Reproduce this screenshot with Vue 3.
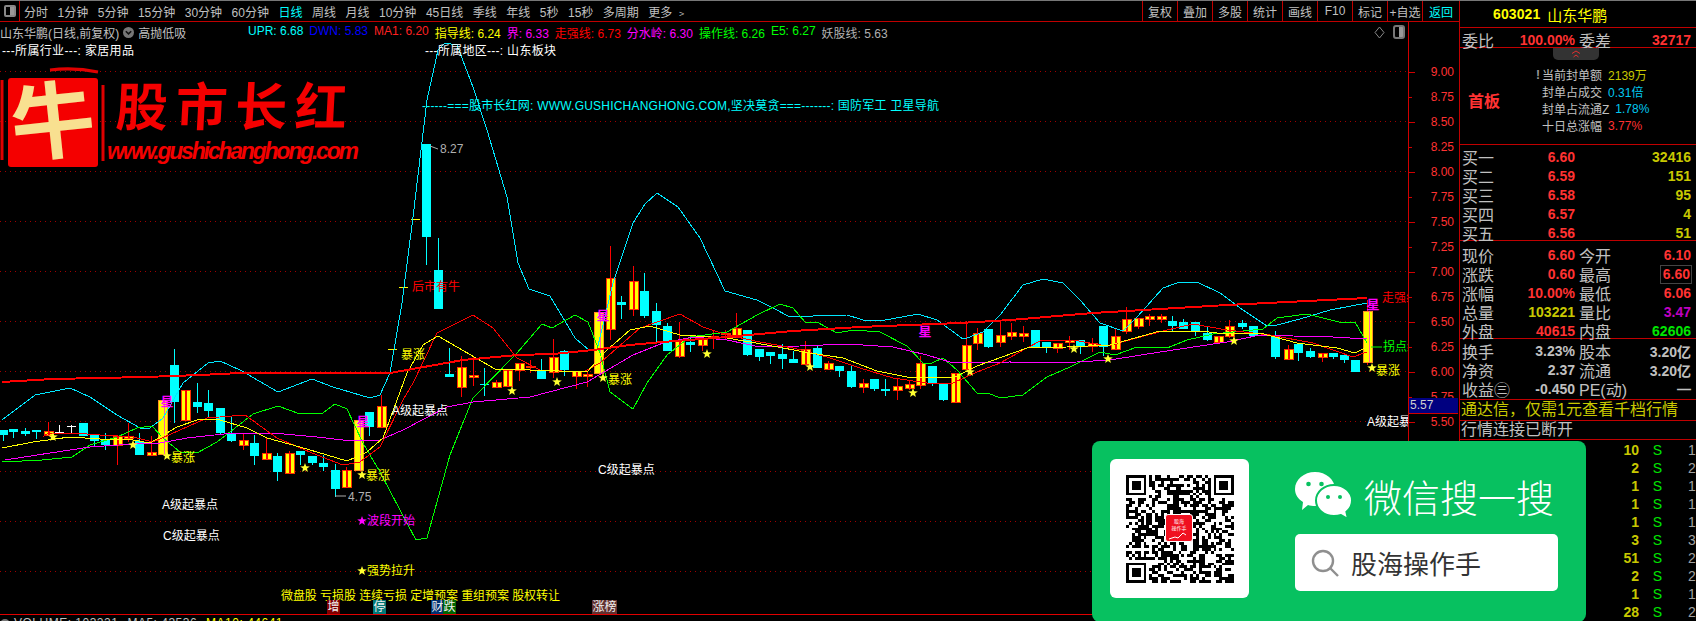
<script setup>
const periods = ['分时', '1分钟', '5分钟', '15分钟', '30分钟', '60分钟', '日线', '周线', '月线', '10分钟', '45日线', '季线', '年线', '5秒', '15秒', '多周期', '更多 ﹥']
const tools = ['复权', '叠加', '多股', '统计', '画线', 'F10', '标记', '+自选']

const legend = [
  { t: 'UPR: 6.68', c: '#00ffff' },
  { t: 'DWN: 5.83', c: '#0000ff' },
  { t: 'MA1: 6.20', c: '#ff2020' },
  { t: '指导线: 6.24', c: '#ffff00' },
  { t: '界: 6.33', c: '#ff00ff' },
  { t: '走强线: 6.73', c: '#ff0000' },
  { t: '分水岭: 6.30', c: '#ff00ff' },
  { t: '操作线: 6.26', c: '#00ff00' },
  { t: 'E5: 6.27', c: '#00ff00' },
  { t: '妖股线: 5.63', c: '#b0b0b0' },
]

// x, wick top, body top, body bottom, wick bottom, kind
// d = falling (cyan), u = rising (striped), s = limit-up bar, t = white cross, y = yellow dash
const candles = [
  [3,430,430,435,441,'d'],[13,429,429,432,438,'d'],[25,428,431,434,436,'d'],[36,430,430,432,439,'d'],
  [48,422,431,435,435,'u'],[59,425,432,433,433,'t'],[71,425,426,433,433,'t'],[83,423,423,436,436,'d'],
  [94,434,434,441,447,'d'],[105,433,439,445,450,'d'],[117,435,436,445,465,'u'],[128,423,436,438,442,'u'],
  [139,433,441,455,455,'d'],[151,436,452,455,455,'u'],[162,400,400,454,454,'s'],[174,349,365,402,423,'d'],
  [185,390,390,420,420,'u'],[197,383,402,407,413,'d'],[208,390,403,411,418,'d'],[220,408,408,433,435,'d'],
  [231,417,434,441,442,'d'],[243,434,440,445,450,'u'],[254,435,443,456,465,'d'],[266,438,453,459,459,'u'],
  [277,453,456,472,481,'d'],[289,451,453,473,473,'u'],[300,451,451,455,465,'d'],[312,456,456,463,465,'d'],
  [323,455,463,467,471,'d'],[335,464,470,489,497,'d'],[346,467,470,487,487,'u'],[358,420,420,470,470,'s'],
  [369,412,412,427,436,'d'],[381,395,406,427,427,'u'],[392,349,349,350,350,'y'],[403,287,287,288,288,'y'],
  [415,219,219,220,220,'y'],[426,144,144,237,265,'d'],[438,238,270,309,309,'d'],[449,348,374,377,377,'d'],
  [461,356,367,387,397,'u'],[473,356,375,377,386,'u'],[484,368,384,385,396,'d'],[496,380,382,387,387,'u'],
  [507,370,370,386,386,'u'],[519,363,363,370,381,'u'],[530,360,366,367,373,'u'],[541,359,371,379,379,'d'],
  [553,339,357,372,378,'u'],[564,350,351,370,376,'d'],[576,371,371,376,389,'u'],[587,371,374,376,387,'u'],
  [598,312,312,373,373,'s'],[610,246,278,329,340,'u'],[621,296,302,305,319,'d'],[633,266,281,309,316,'u'],
  [644,273,291,316,318,'d'],[656,303,311,325,342,'d'],[667,323,326,351,351,'d'],[679,322,340,356,358,'u'],
  [690,336,342,345,352,'d'],[702,336,339,345,351,'u'],[713,330,336,338,349,'u'],[725,330,333,334,340,'u'],
  [736,313,328,337,338,'u'],[747,330,330,355,356,'d'],[759,349,349,357,361,'d'],[770,352,352,356,364,'d'],
  [782,344,354,359,369,'d'],[793,351,359,363,363,'d'],[805,341,349,364,364,'u'],[817,346,348,368,368,'d'],
  [828,361,363,369,369,'u'],[839,366,366,371,377,'d'],[851,366,371,387,388,'d'],[863,379,383,387,393,'u'],
  [874,379,379,389,391,'d'],[885,379,389,391,396,'d'],[897,379,386,390,400,'u'],[909,380,384,388,390,'u'],
  [920,356,363,385,389,'u'],[932,366,366,383,386,'d'],[943,383,383,400,401,'d'],[955,373,373,402,402,'u'],
  [966,321,345,369,369,'u'],[977,328,333,343,350,'u'],[988,329,329,347,348,'d'],[1000,322,335,342,347,'u'],
  [1011,323,332,336,340,'u'],[1023,326,333,336,342,'u'],[1035,330,330,347,347,'d'],[1046,342,342,348,353,'d'],
  [1057,343,343,348,353,'u'],[1069,336,340,342,350,'u'],[1080,340,340,347,354,'d'],[1092,338,343,346,352,'u'],
  [1103,326,326,347,356,'d'],[1115,328,336,349,350,'u'],[1126,307,319,331,334,'u'],[1138,318,318,326,329,'u'],
  [1149,314,316,319,326,'u'],[1161,314,316,319,323,'u'],[1172,316,321,326,331,'d'],[1183,319,322,329,329,'d'],
  [1195,322,322,331,336,'d'],[1207,327,333,340,341,'d'],[1218,336,336,342,342,'u'],[1229,320,326,336,338,'u'],
  [1242,320,323,327,329,'d'],[1253,326,326,336,337,'d'],[1275,331,337,357,359,'d'],[1288,345,349,359,359,'u'],
  [1298,344,344,353,361,'d'],[1310,348,351,357,358,'d'],[1322,353,353,357,362,'u'],[1333,353,353,357,359,'d'],
  [1344,355,355,360,363,'d'],[1355,360,360,372,372,'d'],[1367,300,311,362,365,'s'],
].map(([x, wt, bt, bb, wb, kind]) => ({ x, wt, bt, bb, wb, kind }))

const lines = [
  { c: '#00e8ff', p: '2,420 35,395 70,388 90,397 117,415 140,428 150,428 163,418 183,383 208,363 220,361 240,370 278,392 312,379 333,387 370,398 380,395 390,373 402,303 413,217 427,100 438,50 445,43 457,45 473,87 487,130 507,197 518,263 529,289 550,296 575,338 590,351 597,350 613,283 633,223 645,204 657,193 678,207 700,238 725,291 757,300 773,308 790,317 813,316 847,315 863,320 880,321 918,314 937,320 963,339 967,338 983,332 1000,315 1023,285 1043,279 1063,283 1080,300 1100,323 1123,331 1137,317 1163,288 1177,283 1197,282 1220,293 1243,310 1267,326 1277,325 1300,319 1330,310 1367,303' },
  { c: '#00ff00', p: '2,462 42,460 72,457 90,445 117,437 137,428 152,426 163,438 180,452 197,453 217,442 253,414 278,406 300,414 323,413 335,404 347,409 363,443 380,472 400,510 416,540 427,538 450,455 460,430 473,398 517,353 542,324 552,328 575,315 588,322 600,353 610,392 633,409 647,383 667,355 690,337 727,332 757,315 780,304 793,308 805,322 817,322 837,333 853,330 880,332 907,346 923,363 932,363 943,358 957,370 977,393 988,393 1000,398 1023,395 1047,377 1070,367 1100,352 1115,355 1137,347 1167,348 1187,340 1213,334 1263,329 1277,318 1307,314 1343,323 1355,322 1367,343' },
  { c: '#ff00ff', p: '5,460 50,453 90,447 133,444 160,443 187,438 233,433 273,433 317,437 343,440 380,440 403,430 447,407 473,402 530,397 587,382 633,355 663,343 693,337 727,340 760,347 800,346 847,344 893,347 927,355 953,363 1010,362 1043,363 1077,362 1110,360 1160,352 1200,346 1227,342 1260,335 1293,336 1333,337 1367,339' },
  { c: '#ff0000', p: '43,437 48,433 73,433 100,435 133,437 153,442 180,430 207,418 245,415 277,438 317,455 343,465 360,462 380,447 403,400 413,383 437,333 473,315 493,328 517,358 540,370 583,372 600,363 640,328 680,314 703,327 727,335 760,342 793,348 827,357 860,368 893,378 927,383 953,383 977,372 1000,363 1027,348 1040,341 1073,340 1107,346 1137,338 1163,331 1193,324 1227,330 1270,335 1313,343 1353,357 1367,352' },
  { c: '#ffff00', p: '2,448 33,442 70,437 100,439 133,440 150,443 177,427 200,419 220,420 247,428 267,438 300,447 327,455 347,461 367,452 383,438 407,373 423,345 438,336 495,369 530,370 587,372 607,350 630,330 650,326 680,335 727,338 767,345 810,353 843,358 877,371 907,377 937,377 953,378 977,366 1027,348 1067,347 1110,345 1160,331 1200,331 1217,333 1260,333 1297,343 1337,348 1355,353 1367,347' },
  { c: '#ff0000', w: 2, p: '2,382 53,379 145,377 200,375 240,373 390,373 463,360 517,355 553,354 593,350 630,345 663,342 727,337 793,331 860,327 960,323 1010,320 1093,313 1227,305 1367,298' },
]

const starPoints = (cx, cy, r = 5) => {
  const pts = []
  for (let i = 0; i < 10; i++) {
    const a = -Math.PI / 2 + (i * Math.PI) / 5
    const d = i % 2 ? r * 0.42 : r
    pts.push(`${(cx + d * Math.cos(a)).toFixed(1)},${(cy + d * Math.sin(a)).toFixed(1)}`)
  }
  return pts.join(' ')
}

const stars = [
  [53,437],[133,445],[167,456],[305,468],[362,475],[362,571],[512,391],[557,382],[603,378],[707,354],
  [810,367],[913,393],[970,372],[1074,349],[1108,359],[1234,341],[1372,368],
]

const marks = [[167,401],[363,421],[603,315],[925,331],[1373,304]]

const notes = [
  { x: 2, y: 51, t: '---所属行业---: 家居用品', c: '#fff', len: 132 },
  { x: 425, y: 51, t: '---所属地区---: 山东板块', c: '#fff', len: 131 },
  { x: 422, y: 106, t: '------===股市长红网: WWW.GUSHICHANGHONG.COM,坚决莫贪===-------: 国防军工 卫星导航', c: '#00ffff', len: 517 },
  { x: 440, y: 149, t: '8.27', c: '#b0b0b0' },
  { x: 348, y: 497, t: '4.75', c: '#b0b0b0' },
  { x: 412, y: 287, t: '后市有牛', c: '#ff0000' },
  { x: 401, y: 355, t: '暴涨', c: '#ffff00' },
  { x: 171, y: 458, t: '暴涨', c: '#ffff00' },
  { x: 366, y: 476, t: '暴涨', c: '#ffff00' },
  { x: 608, y: 380, t: '暴涨', c: '#ffff00' },
  { x: 1376, y: 371, t: '暴涨', c: '#ffff00' },
  { x: 162, y: 505, t: 'A级起暴点', c: '#fff' },
  { x: 163, y: 536, t: 'C级起暴点', c: '#fff' },
  { x: 392, y: 411, t: 'A级起暴点', c: '#fff' },
  { x: 598, y: 470, t: 'C级起暴点', c: '#fff' },
  { x: 1367, y: 422, t: 'A级起暴点', c: '#fff' },
  { x: 367, y: 521, t: '波段开始', c: '#ff00ff' },
  { x: 367, y: 571, t: '强势拉升', c: '#ffff00' },
  { x: 1382, y: 298, t: '走强线', c: '#ff0000' },
  { x: 1383, y: 347, t: '拐点线', c: '#00ff00' },
  { x: 281, y: 596, t: '微盘股 亏损股 连续亏损 定增预案 重组预案 股权转让', c: '#ffff00', len: 279 },
]

const tags = [
  { x: 327, w: 13, t: '增', bg: '#800000' },
  { x: 373, w: 13, t: '停', bg: '#007878' },
  { x: 431, w: 13, t: '财', bg: '#003070' },
  { x: 443, w: 13, t: '跌', bg: '#006400' },
  { x: 592, w: 25, t: '涨榜', bg: '#603030' },
]

const gridYs = [71, 121, 171, 221, 271, 321, 371, 421, 471, 521, 571]
const axisLabels = []
for (let i = 0; i < 15; i++) {
  axisLabels.push({ y: 71 + i * 25, t: (9 - i * 0.25).toFixed(2), major: i % 2 === 0 })
}

const bids = [
  ['买一', '6.60', '32416'], ['买二', '6.59', '151'], ['买三', '6.58', '95'], ['买四', '6.57', '4'], ['买五', '6.56', '51'],
]
const quote = [
  { a: '现价', av: '6.60', ac: 'red', b: '今开', bv: '6.10', bc: 'red' },
  { a: '涨跌', av: '0.60', ac: 'red', b: '最高', bv: '6.60', bc: 'red', boxed: true },
  { a: '涨幅', av: '10.00%', ac: 'red', b: '最低', bv: '6.06', bc: 'red' },
  { a: '总量', av: '103221', ac: 'olive', b: '量比', bv: '3.47', bc: 'purple' },
  { a: '外盘', av: '40615', ac: 'red', b: '内盘', bv: '62606', bc: 'green' },
]
const finance = [
  { a: '换手', av: '3.23%', b: '股本', bv: '3.20亿' },
  { a: '净资', av: '2.37', b: '流通', bv: '3.20亿' },
  { a: '收益㊂', av: '-0.450', b: 'PE(动)', bv: '—' },
]
const sealInfo = [
  { l: '当前封单额', v: '2139万', c: 'olive', warn: true },
  { l: '封单占成交', v: '0.31倍', c: 'sky' },
  { l: '封单占流通Z', v: '1.78%', c: 'sky' },
  { l: '十日总涨幅', v: '3.77%', c: 'red' },
]
const trades = [[10, 1], [2, 2], [1, 1], [1, 1], [1, 1], [3, 3], [51, 2], [2, 2], [1, 1], [28, 2]]

// not a real code, only looks like one
const QR_SIZE = 37
const finder = (r, c) => {
  const inBox = (top, left) => {
    const y = r - top
    const x = c - left
    if (y < -1 || y > 7 || x < -1 || x > 7) return null
    if (y < 0 || y > 6 || x < 0 || x > 6) return false
    return y === 0 || y === 6 || x === 0 || x === 6 || (y >= 2 && y <= 4 && x >= 2 && x <= 4)
  }
  return inBox(0, 0) ?? inBox(0, QR_SIZE - 7) ?? inBox(QR_SIZE - 7, 0)
}
let seed = 20210603
const rnd = () => {
  seed = (seed * 1664525 + 1013904223) % 4294967296
  return seed / 4294967296
}
let qrPath = ''
for (let r = 0; r < QR_SIZE; r++) {
  for (let c = 0; c < QR_SIZE; c++) {
    const f = finder(r, c)
    if (f ?? rnd() > 0.47) qrPath += `M${c} ${r}h1v1h-1z`
  }
}
</script>

<template>
  <div class="screen">
    <div class="left">
      <div class="toolbar">
        <span class="panel-btn"><i></i></span>
        <div class="periods">
          <span v-for="p in periods" :key="p" :class="{ active: p === '日线' }">{{ p }}</span>
        </div>
        <div class="tools">
          <span v-for="t in tools" :key="t" class="tool">{{ t }}</span>
          <span class="tool back">返回</span>
        </div>
      </div>

      <div class="chart-row">
        <div class="chart-pane">
          <div class="title-row">
            <span class="stock">山东华鹏(日线,前复权)</span>
            <svg class="drop" width="11" height="11" viewBox="0 0 11 11">
              <circle cx="5.5" cy="5.5" r="5.5" fill="#777" />
              <path d="M2.8 4.2l2.7 2.7 2.7-2.7" fill="none" stroke="#111" stroke-width="1.5" />
            </svg>
            <span class="stock">高抛低吸</span>
            <div class="legend">
              <span v-for="l in legend" :key="l.t" :style="{ color: l.c }">{{ l.t }}</span>
            </div>
            <div class="corner">
              <svg width="11" height="13" viewBox="0 0 11 13">
                <path d="M5.5 1L10 6.5 5.5 12 1 6.5z" fill="none" stroke="#888" />
              </svg>
              <span class="pill"><i></i></span>
            </div>
          </div>

          <svg class="chart" width="1408" height="572" viewBox="0 42 1408 572">
            <line v-for="y in gridYs" :key="y" x1="0" x2="1408" :y1="y + 0.5" :y2="y + 0.5" class="grid" />

            <g class="logo">
              <rect x="8" y="78" width="90" height="89" rx="3" fill="#f40000" />
              <path d="M50 70q24-3 48 2M2 80v80M103 85v76" stroke="#e00000" stroke-width="3" fill="none" />
              <text x="11" y="152" class="niu" transform="rotate(-6 53 122)">牛</text>
              <text x="116" y="126" class="brand" textLength="231" transform="skewX(-3)" style="transform-origin: 230px 105px">股市长红</text>
              <text x="107" y="159" class="site" textLength="252">www.gushichanghong.com</text>
            </g>

            <g class="crisp">
              <g v-for="c in candles" :key="c.x">
                <template v-if="c.kind === 'd'">
                  <rect :x="c.x" :y="c.wt" width="1" :height="c.wb - c.wt" fill="#00ffff" />
                  <rect :x="c.x - 4" :y="c.bt" width="9" :height="c.bb - c.bt" fill="#00ffff" />
                </template>
                <template v-else-if="c.kind === 'u'">
                  <rect :x="c.x" :y="c.wt" width="1" :height="c.wb - c.wt" fill="#ff0000" />
                  <rect :x="c.x - 4" :y="c.bt" width="9" :height="c.bb - c.bt" fill="#ffff00" stroke="#ff3000" />
                  <rect :x="c.x" :y="c.bt" width="2" :height="c.bb - c.bt" fill="#ff0000" />
                </template>
                <template v-else-if="c.kind === 's'">
                  <rect :x="c.x" :y="c.wt" width="1" :height="c.wb - c.wt" fill="#ff0000" />
                  <rect :x="c.x - 4" :y="c.bt" width="9" :height="c.bb - c.bt" fill="#ffff00" stroke="#ff8c20" />
                  <rect :x="c.x + 2" :y="c.bt" width="1" :height="c.bb - c.bt" fill="#ff60a0" />
                </template>
                <template v-else-if="c.kind === 't'">
                  <rect :x="c.x - 4" :y="c.bt" width="9" height="1" fill="#fff" />
                  <rect :x="c.x" :y="c.wt" width="1" :height="c.wb - c.wt" fill="#fff" />
                </template>
                <rect v-else :x="c.x - 4" :y="c.bt" width="9" height="1" fill="#ffff00" />
              </g>
              <polyline
                v-for="(l, i) in lines"
                :key="i"
                :points="l.p"
                fill="none"
                :stroke="l.c"
                :stroke-width="l.w || 1"
              />
            </g>

            <polygon v-for="s in stars" :key="s.join()" :points="starPoints(s[0], s[1])" fill="#ffff30" />
            <polygon :points="starPoints(362, 521)" fill="#ff00ff" />
            <text v-for="m in marks" :key="m.join()" :x="m[0]" :y="m[1]" class="mark">星</text>

            <text
              v-for="n in notes"
              :key="n.x + n.t"
              :x="n.x"
              :y="n.y"
              :fill="n.c"
              :textLength="n.len"
              class="note"
            >{{ n.t }}</text>

            <path d="M430 146l8 3M335 496h11" fill="none" stroke="#aaa" />
            <path d="M1371 347h11" fill="none" stroke="#00ff00" />

            <g v-for="t in tags" :key="t.t">
              <rect :x="t.x" y="600" :width="t.w" height="14" :fill="t.bg" />
              <text :x="t.x + t.w / 2" y="607" class="tag">{{ t.t }}</text>
            </g>
          </svg>

          <div class="volume">
            <i class="vol-dot"></i>
            <span class="vol-a">VOLUME: 103221</span>
            <span class="vol-a">MA5: 43536</span>
            <span class="vol-b">MA10: 44641</span>
          </div>
        </div>

        <div class="axis">
          <svg width="49" height="593" viewBox="0 21 49 593">
            <g v-for="a in axisLabels" :key="a.t">
              <line x1="0" :x2="a.major ? 6 : 3" :y1="a.y + 0.5" :y2="a.y + 0.5" stroke="#d00000" />
              <text x="45" :y="a.y" class="axis-label">{{ a.t }}</text>
            </g>
          </svg>
          <div class="last-price">5.57</div>
        </div>
      </div>
    </div>

    <aside class="panel">
      <div class="head">
        <span class="code">603021</span>
        <span class="name">山东华鹏</span>
      </div>
      <div class="row ratio">
        <span class="lbl">委比</span><b class="red">100.00%</b>
        <span class="lbl second">委差</span><b class="red">32717</b>
      </div>
      <div class="seal">
        <span class="collapse">
          <svg width="10" height="8" viewBox="0 0 10 8">
            <path d="M1 3.5l4-2.5 4 2.5M2.5 7l2.500-2 2.500 2" fill="none" stroke="#e03030" />
          </svg>
        </span>
        <strong class="first">首板</strong>
        <div class="seal-info">
          <div v-for="s in sealInfo" :key="s.l" class="seal-row">
            <span v-if="s.warn" class="warn">!</span>
            <span>{{ s.l }}</span>
            <span :class="s.c">{{ s.v }}</span>
          </div>
        </div>
      </div>

      <div class="block bids">
        <div v-for="b in bids" :key="b[0]" class="row">
          <span class="lbl">{{ b[0] }}</span><b class="red">{{ b[1] }}</b>
          <span></span><b class="olive">{{ b[2] }}</b>
        </div>
      </div>

      <div class="block quote">
        <div v-for="q in quote" :key="q.a" class="row">
          <span class="lbl">{{ q.a }}</span><b :class="q.ac">{{ q.av }}</b>
          <span class="lbl second">{{ q.b }}</span>
          <b :class="q.bc"><span :class="{ boxed: q.boxed }">{{ q.bv }}</span></b>
        </div>
      </div>

      <div class="block finance">
        <div v-for="f in finance" :key="f.a" class="row">
          <span class="lbl">{{ f.a }}</span><b>{{ f.av }}</b>
          <span class="lbl second">{{ f.b }}</span><b>{{ f.bv }}</b>
        </div>
      </div>

      <div class="promo">通达信，仅需1元查看千档行情</div>
      <div class="status">行情连接已断开</div>

      <div class="trades">
        <div v-for="(t, i) in trades" :key="i" class="trade">
          <span class="t-vol">{{ t[0] }}</span>
          <span class="t-side">S</span>
          <span class="t-num">{{ t[1] }}</span>
        </div>
      </div>
    </aside>

    <div class="wx-card">
      <div class="qr-box">
        <svg class="qr" width="108" height="108" :viewBox="`0 0 ${QR_SIZE} ${QR_SIZE}`">
          <path :d="qrPath" fill="#000" />
        </svg>
        <div class="qr-logo">
          <span>股海<br />操作手</span>
          <svg width="22" height="8" viewBox="0 0 22 8">
            <path d="M1 7l6-2 3 1 5-5 3 2" fill="none" stroke="#fff" />
          </svg>
        </div>
      </div>
      <div class="wx-side">
        <div class="wx-title">
          <svg width="57" height="47" viewBox="0 0 57 47">
            <path d="M20 0c11 0 20 7.600 20 17s-9 17-20 17c-2.500 0-5-.4-7-1l-6 5 1-8C3 27 0 22.500 0 17 0 7.600 9 0 20 0z" fill="#fff" />
            <circle cx="13.500" cy="12" r="2.300" fill="#07c160" />
            <circle cx="26.500" cy="12" r="2.300" fill="#07c160" />
            <path d="M39 13c10 0 18 7 18 15.500 0 4.500-2.200 8.500-5.600 11.300L53 47l-7-4c-2.200.7-4.500 1-7 1-10 0-18-7-18-15.500S29 13 39 13z" fill="#fff" stroke="#07c160" stroke-width="2" />
            <circle cx="33" cy="25" r="2" fill="#07c160" />
            <circle cx="45" cy="25" r="2" fill="#07c160" />
          </svg>
          <span>微信搜一搜</span>
        </div>
        <div class="wx-search">
          <svg width="28" height="28" viewBox="0 0 28 28">
            <circle cx="12" cy="12" r="10" fill="none" stroke="#8f8f8f" stroke-width="2.400" />
            <path d="M19.500 19.500L27 27" stroke="#8f8f8f" stroke-width="2.400" />
          </svg>
          <span>股海操作手</span>
        </div>
      </div>
    </div>
  </div>
</template>

<style>
html,
body {
  margin: 0;
  background: #000;
}
</style>

<style scoped>
.screen {
  position: relative;
  display: flex;
  width: 1696px;
  height: 621px;
  overflow: hidden;
  box-sizing: border-box;
  border-top: 1px solid #777;
  background: #000;
  color: #c0c0c0;
  font-family: "Liberation Sans", "Noto Sans CJK SC", sans-serif;
  font-size: 12px;
}

.left {
  display: flex;
  flex-direction: column;
  width: 1459px;
  flex-shrink: 0;
}

.toolbar {
  display: flex;
  align-items: center;
  height: 21px;
  box-sizing: border-box;
  border-bottom: 1px solid #c00000;
}

.panel-btn {
  display: flex;
  align-items: center;
  justify-content: center;
  width: 20px;
  height: 100%;
  box-sizing: border-box;
  border-right: 1px solid #c00000;
}

.panel-btn i {
  width: 12px;
  height: 12px;
  box-sizing: border-box;
  border: 2px solid #888;
  border-radius: 2px;
  background: linear-gradient(90deg, #000 50%, #999 50%);
}

.periods {
  display: flex;
  gap: 9.5px;
  margin-left: 4px;
}

.periods .active {
  color: #00ffff;
}

.tools {
  display: flex;
  height: 100%;
  margin-left: auto;
}

.tool {
  display: flex;
  align-items: center;
  justify-content: center;
  width: 35px;
  border-left: 1px solid #c00000;
  box-sizing: border-box;
  white-space: nowrap;
}

.tool.back {
  width: 37px;
  color: #00ffff;
}

.chart-row {
  display: flex;
  flex: 1;
  min-height: 0;
}

.chart-pane {
  display: flex;
  flex-direction: column;
  width: 1408px;
  flex-shrink: 0;
  overflow: hidden;
}

.title-row {
  display: flex;
  align-items: center;
  height: 20px;
  flex-shrink: 0;
  white-space: nowrap;
}

.drop {
  margin: 0 4px;
}

.legend {
  display: flex;
  gap: 6px;
  position: absolute;
  left: 248px;
}

.corner {
  display: flex;
  align-items: center;
  gap: 8px;
  margin-left: auto;
  margin-right: 3px;
}

.pill {
  display: block;
  width: 12px;
  height: 14px;
  box-sizing: border-box;
  border: 2px solid #777;
  border-radius: 3px;
  background: linear-gradient(90deg, #000 50%, #999 50%);
}

.chart {
  display: block;
  flex-shrink: 0;
}

.grid {
  stroke: #a00000;
  stroke-dasharray: 1 4;
}

.crisp {
  shape-rendering: crispEdges;
}

.note,
.mark,
.tag {
  font-size: 12px;
  dominant-baseline: central;
  white-space: pre;
}

.mark {
  fill: #ff00ff;
  text-anchor: middle;
  font-weight: 700;
  font-size: 13px;
}

.tag {
  fill: #f0f0f0;
  text-anchor: middle;
}

.niu {
  font-family: "Noto Sans CJK SC", sans-serif;
  font-size: 84px;
  font-weight: 700;
  fill: #f8e090;
}

.brand {
  font-family: "Noto Sans CJK SC", sans-serif;
  font-size: 52px;
  font-weight: 700;
  fill: #f40000;
}

.site {
  font-family: "Liberation Sans", sans-serif;
  font-size: 23px;
  font-style: italic;
  font-weight: 700;
  fill: #f40000;
}

.volume {
  display: flex;
  gap: 9px;
  flex: 1;
  min-height: 0;
  overflow: hidden;
  border-top: 1px solid #e00000;
  padding-top: 1px;
  line-height: 14px;
  letter-spacing: 0.5px;
}

.vol-dot {
  width: 10px;
  height: 10px;
  margin-top: 3px;
  margin-right: -5px;
  border-radius: 50%;
  background: #777;
}

.vol-b {
  color: #ffff00;
}

.axis {
  position: relative;
  width: 50px;
  flex-shrink: 0;
  box-sizing: border-box;
  border-left: 1px solid #d00000;
}

.axis svg {
  display: block;
}

.axis-label {
  font-size: 12px;
  fill: #ff3232;
  text-anchor: end;
  dominant-baseline: central;
}

.last-price {
  position: absolute;
  left: 0;
  right: 0;
  top: 376px;
  height: 16px;
  box-sizing: border-box;
  padding-left: 1px;
  border-bottom: 1px solid #d00000;
  background: #000080;
  color: #d0d0d0;
  line-height: 15px;
}

.panel {
  display: flex;
  flex-direction: column;
  flex: 1;
  min-width: 0;
  border-left: 1px solid #c00000;
}

.head {
  display: flex;
  align-items: center;
  gap: 7px;
  height: 27px;
  flex-shrink: 0;
  box-sizing: border-box;
  padding-left: 33px;
  border-bottom: 1px solid #c00000;
  color: #ffff00;
}

.code {
  font-size: 14px;
  font-weight: 700;
  letter-spacing: 0.1px;
}

.name {
  font-size: 15px;
}

.row {
  display: grid;
  grid-template-columns: 32px 81px 36px 1fr;
  align-items: center;
  height: 19px;
  padding: 0 5px 0 2px;
  white-space: nowrap;
}

.row b {
  text-align: right;
  font-size: 14px;
}

.lbl {
  font-size: 16px;
  color: #c0c0c0;
}

.second {
  padding-left: 4px;
}

.ratio {
  height: 20px;
  flex-shrink: 0;
  box-sizing: border-box;
  border-bottom: 1px solid #c00000;
}

.red {
  color: #ff3232;
}

.olive {
  color: #c8c800;
}

.green {
  color: #00e600;
}

.purple {
  color: #c000c0;
}

.sky {
  color: #00c8f0;
}

.boxed {
  display: inline-block;
  padding: 0 1px 0 2px;
  outline: 1px solid #444;
  line-height: 17px;
}

.seal {
  position: relative;
  display: flex;
  align-items: center;
  height: 97px;
  flex-shrink: 0;
  box-sizing: border-box;
  padding-top: 8px;
  border-bottom: 1px solid #c00000;
}

.collapse {
  position: absolute;
  top: 0;
  left: 93px;
  display: flex;
  align-items: center;
  justify-content: center;
  width: 46px;
  height: 12px;
  background: #333;
  border-radius: 0 0 5px 5px;
}

.first {
  margin-left: 8px;
  font-size: 16px;
  color: #ff3232;
}

.seal-info {
  position: relative;
  margin-left: 42px;
}

.seal-row {
  display: flex;
  gap: 6px;
  align-items: center;
  height: 17px;
  font-size: 12px;
}

.seal-row .warn {
  position: absolute;
  left: -6px;
  color: #999;
  font-weight: 700;
}

.block {
  flex-shrink: 0;
  box-sizing: border-box;
  border-bottom: 1px solid #c00000;
}

.bids {
  height: 96px;
}

.quote {
  height: 98px;
  padding-top: 2px;
}

.finance {
  height: 61px;
}

.finance .row b {
  color: #c0c0c0;
}

.promo,
.status {
  flex-shrink: 0;
  box-sizing: border-box;
  padding-left: 1px;
  border-bottom: 1px solid #c00000;
  font-size: 16px;
  white-space: nowrap;
}

.promo {
  height: 21px;
  line-height: 20px;
  color: #c8c800;
}

.status {
  height: 19px;
  line-height: 18px;
  color: #c0c0c0;
}

.trades {
  padding-top: 1px;
}

.trade {
  display: flex;
  height: 18px;
  align-items: center;
  font-size: 14px;
  font-weight: 700;
}

.t-vol {
  width: 179px;
  text-align: right;
  color: #c8c800;
}

.t-side {
  width: 37px;
  text-align: center;
  color: #00e600;
  font-weight: 400;
}

.t-num {
  margin-left: 12px;
  color: #a0a0a0;
  font-weight: 400;
}

.wx-card {
  position: absolute;
  left: 1092px;
  top: 440px;
  display: flex;
  gap: 46px;
  width: 494px;
  height: 181px;
  box-sizing: border-box;
  padding: 18px 0 0 18px;
  border-radius: 8px;
  background: #07c160;
}

.qr-box {
  position: relative;
  display: flex;
  align-items: center;
  justify-content: center;
  width: 139px;
  height: 139px;
  flex-shrink: 0;
  border-radius: 6px;
  background: #fff;
}

.qr {
  shape-rendering: crispEdges;
}

.qr-logo {
  position: absolute;
  left: 55px;
  top: 55px;
  display: flex;
  flex-direction: column;
  align-items: center;
  width: 28px;
  height: 28px;
  box-sizing: border-box;
  border: 1px solid #fff;
  border-radius: 3px;
  background: #f01020;
  color: #fff;
  font-size: 5px;
  line-height: 7px;
  text-align: center;
  padding-top: 3px;
}

.wx-side {
  display: flex;
  flex-direction: column;
  gap: 15px;
  padding-top: 13px;
}

.wx-title {
  display: flex;
  align-items: center;
  gap: 12px;
  height: 47px;
  color: #fff;
  font-family: "Noto Sans CJK SC", sans-serif;
  font-size: 38px;
  font-weight: 300;
  line-height: 47px;
}

.wx-search {
  display: flex;
  align-items: center;
  gap: 12px;
  width: 263px;
  height: 57px;
  box-sizing: border-box;
  padding-left: 16px;
  border-radius: 5px;
  background: #fff;
  color: #333;
  font-family: "Noto Sans CJK SC", sans-serif;
  font-size: 26px;
}
</style>
